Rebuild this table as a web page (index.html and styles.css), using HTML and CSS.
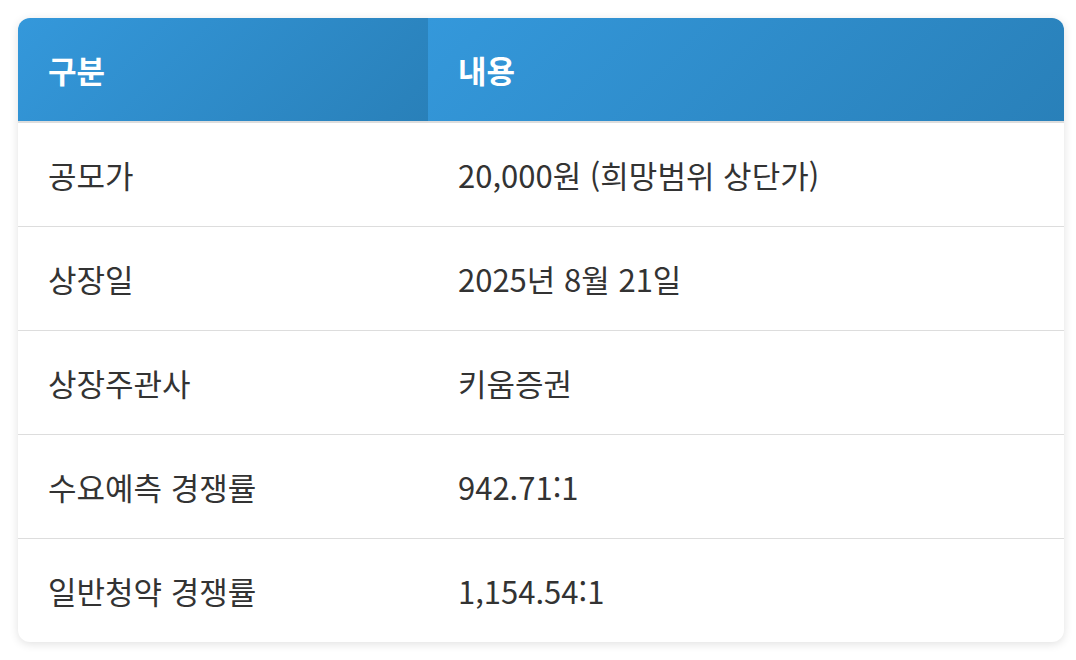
FILE: index.html
```html
<!DOCTYPE html>
<html lang="ko">
<head>
<meta charset="utf-8">
<link rel="stylesheet" href="styles.css">
</head>
<body>
<div class="wrap">
<table class="info">
<thead>
<tr><th class="col1">구분</th><th>내용</th></tr>
</thead>
<tbody>
<tr><td>공모가</td><td>20,000원 (희망범위 상단가)</td></tr>
<tr><td>상장일</td><td>2025년 8월 21일</td></tr>
<tr><td>상장주관사</td><td>키움증권</td></tr>
<tr><td>수요예측 경쟁률</td><td>942.71:1</td></tr>
<tr><td>일반청약 경쟁률</td><td>1,154.54:1</td></tr>
</tbody>
</table>
</div>
</body>
</html>
```
FILE: styles.css
```css
html, body { margin: 0; padding: 0; background: #fff; }
body { font-family: "Noto Sans CJK KR", "Noto Sans", sans-serif; color: #333; }
.wrap { padding: 18px 12px 18px 18px; }
.info {
  width: 1046px;
  border-collapse: collapse;
  border-radius: 12px;
  overflow: hidden;
  box-shadow: 0 2px 10px rgba(0,0,0,0.12);
  font-size: 31px;
}
.info th {
  background: linear-gradient(135deg, #3498db, #2980b9);
  color: #fff;
  font-weight: 700;
  text-align: left;
  padding: 0 30px;
  height: 103px;
  border-bottom: 2px solid #ddd;
}
.info .col1 { width: 350px; }
.info td {
  padding: 0 30px;
  height: 103px;
  border-bottom: 1px solid #ddd;
  font-weight: 400;
}
.info tbody tr:last-child td { border-bottom: none; }
```
